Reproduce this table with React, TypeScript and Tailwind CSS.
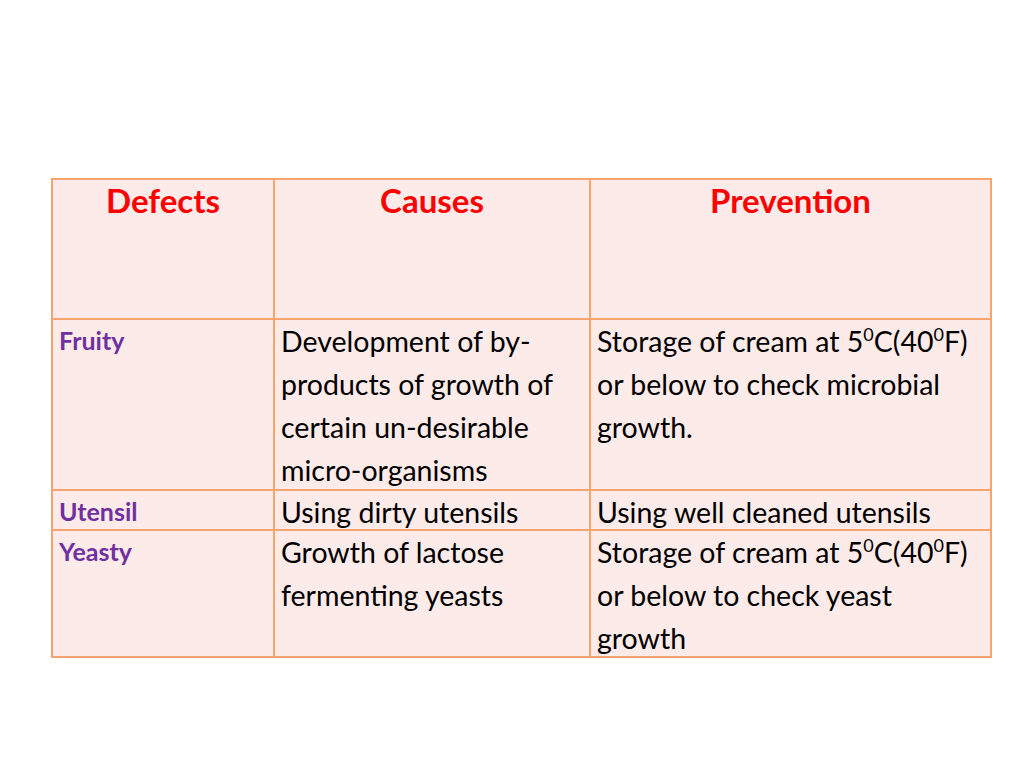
import React from "react";

const cell = "border-2 border-[#f4a46c] align-top p-0";
const body = "text-[28.5px] leading-[43px] text-black px-[6px] overflow-visible";
const label = "text-[25px] leading-[40px] font-bold text-[#7030a0] px-[6px]";
const head = "text-[33px] leading-[40px] font-bold text-[#ff0000] text-center";

function Deg() {
  return <sup className="text-[18px] -top-[11px]">0</sup>;
}

export default function App() {
  return (
    <div
      className="w-[1024px] h-[768px] bg-white pt-[178px] pl-[51px]"
      style={{ fontFamily: "Lato, 'Open Sans', sans-serif" }}
    >
      <table className="border-collapse bg-[#fcebe8] table-fixed w-[939px]">
        <colgroup>
          <col className="w-[222px]" />
          <col className="w-[316px]" />
          <col className="w-[401px]" />
        </colgroup>
        <tbody>
          <tr>
            <td className={cell}>
              <div className={head + " h-[138px]"}>Defects</div>
            </td>
            <td className={cell}>
              <div className={head}>Causes</div>
            </td>
            <td className={cell}>
              <div className={head}>Prevention</div>
            </td>
          </tr>
          <tr>
            <td className={cell}>
              <div className={label + " h-[169px]"}>Fruity</div>
            </td>
            <td className={cell}>
              <div className={body + " h-[169px]"}>
                Development of by-
                <br />
                products of growth of
                <br />
                certain un-desirable
                <br />
                micro-organisms
              </div>
            </td>
            <td className={cell}>
              <div className={body}>
                Storage of cream at 5<Deg />C(40<Deg />F)
                <br />
                or below to check microbial
                <br />
                growth.
              </div>
            </td>
          </tr>
          <tr>
            <td className={cell}>
              <div className={label + " h-[38px]"}>Utensil</div>
            </td>
            <td className={cell}>
              <div className={body + " h-[38px] !leading-[42px]"}>Using dirty utensils</div>
            </td>
            <td className={cell}>
              <div className={body + " h-[38px] !leading-[42px]"}>Using well cleaned utensils</div>
            </td>
          </tr>
          <tr>
            <td className={cell}>
              <div className={label + " h-[125px]"}>Yeasty</div>
            </td>
            <td className={cell}>
              <div className={body + " h-[125px]"}>
                Growth of lactose
                <br />
                fermenting yeasts
              </div>
            </td>
            <td className={cell}>
              <div className={body + " h-[125px]"}>
                Storage of cream at 5<Deg />C(40<Deg />F)
                <br />
                or below to check yeast
                <br />
                growth
              </div>
            </td>
          </tr>
        </tbody>
      </table>
    </div>
  );
}
